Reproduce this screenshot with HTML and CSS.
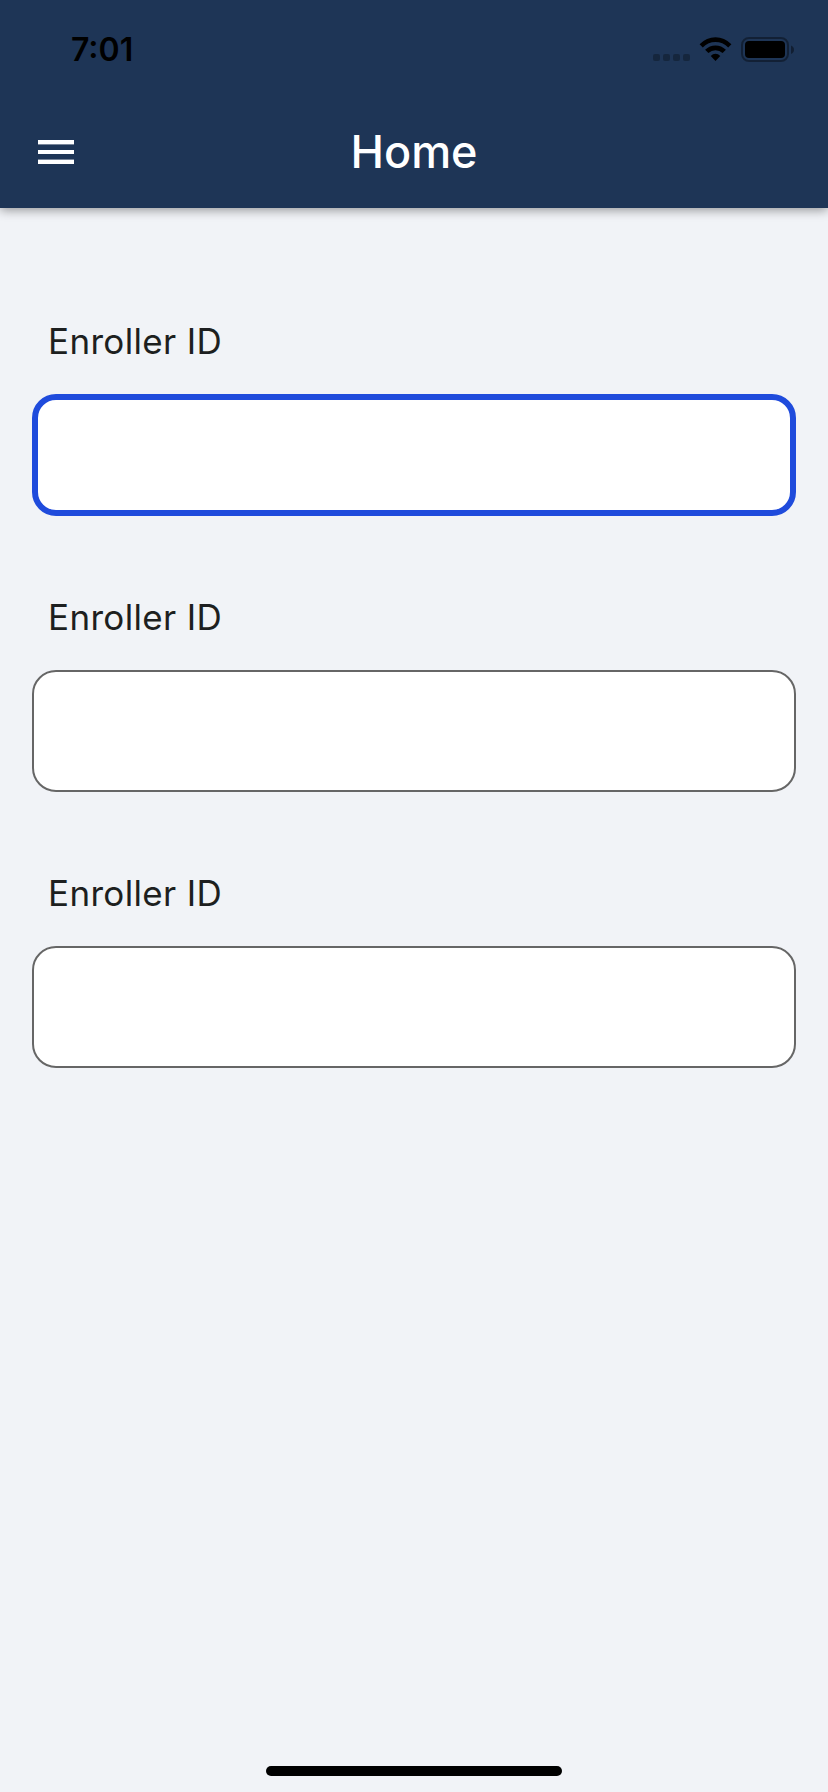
FILE: index.html
```html
<!DOCTYPE html>
<html lang="en">
<head>
<meta charset="utf-8">
<title>Home</title>
<link rel="stylesheet" href="styles.css">
</head>
<body>
<div class="screen">
  <header class="header">
    <div class="status">
      <span class="time">7:01</span>
      <svg class="status-icons" width="144" height="30" viewBox="652 35 144 30">
        <g opacity=".28">
          <rect x="653" y="54" width="7" height="7" rx="2"/>
          <rect x="663" y="54" width="7" height="7" rx="2"/>
          <rect x="673" y="54" width="7" height="7" rx="2"/>
          <rect x="683" y="54" width="7" height="7" rx="2"/>
        </g>
        <path d="M699.6 44.2Q706.5 37.2 715.5 37.2T731.4 44.2L728.2 47.4Q722.7 42 715.5 42T702.8 47.4Z"/>
        <path d="M705.1 49.7Q709.6 45.4 715.5 45.4T725.9 49.7L722.6 53Q719.5 50.2 715.5 50.2T708.4 53Z"/>
        <path d="M710.7 55.9Q712.8 53.7 715.5 53.7T720.3 55.9L715.5 61Z"/>
        <rect x="742" y="38" width="46" height="23" rx="7" fill="none" stroke="#000" stroke-opacity=".38" stroke-width="2"/>
        <rect x="745" y="41" width="40" height="17" rx="4"/>
        <path d="M791 45.5Q794 46.7 794 49.7T791 53.9Z" opacity=".42"/>
      </svg>
    </div>
    <div class="toolbar">
      <svg class="menu" width="36" height="24" viewBox="0 0 36 24" fill="#fff">
        <rect width="36" height="4.4"/>
        <rect y="10" width="36" height="4"/>
        <rect y="19.6" width="36" height="4.4"/>
      </svg>
      <h1 class="title">Home</h1>
    </div>
  </header>
  <main class="form">
    <div class="field">
      <label class="label" for="f1">Enroller ID</label>
      <input class="input input-active" id="f1" type="text">
    </div>
    <div class="field">
      <label class="label" for="f2">Enroller ID</label>
      <input class="input" id="f2" type="text">
    </div>
    <div class="field">
      <label class="label" for="f3">Enroller ID</label>
      <input class="input" id="f3" type="text">
    </div>
  </main>
  <div class="home-indicator"></div>
</div>
</body>
</html>
```
FILE: styles.css
```css
* { box-sizing: border-box; }
body { margin: 0; font-family: Inter, "Liberation Sans", sans-serif; }
.screen {
  display: flex;
  flex-direction: column;
  height: 1792px;
  padding-bottom: 16px;
  background: #f1f3f7;
}
.header {
  height: 208px;
  background: #1e3556;
  box-shadow: 0 2px 10px rgba(0, 0, 0, .4);
}
.status {
  display: flex;
  justify-content: space-between;
  align-items: center;
  height: 96px;
  padding: 4px 32px 0 71px;
}
.time {
  font-size: 32px;
  font-weight: 600;
  line-height: 40px;
}
.toolbar {
  display: grid;
  grid-template-columns: 36px 1fr 36px;
  align-items: center;
  height: 112px;
  padding: 0 38px;
}
.title {
  margin: 0;
  color: #fff;
  font-size: 45px;
  font-weight: 500;
  line-height: 56px;
  text-align: center;
}
.form {
  display: flex;
  flex: 1;
  flex-direction: column;
  gap: 81px;
  padding: 113px 32px 0;
}
.field {
  display: flex;
  flex-direction: column;
  gap: 33px;
}
.label {
  padding-left: 16px;
  color: #1d1f20;
  font-size: 35px;
  line-height: 40px;
  letter-spacing: .35px;
}
.input {
  width: 100%;
  height: 122px;
  padding: 0 24px;
  border: 2px solid #666;
  border-radius: 24px;
  outline: none;
  background: #fff;
  font: inherit;
  font-size: 34px;
}
.input-active { border: 6px solid #1f4bdc; }
.home-indicator {
  align-self: center;
  width: 296px;
  height: 10px;
  border-radius: 5px;
  background: #000;
}
```
